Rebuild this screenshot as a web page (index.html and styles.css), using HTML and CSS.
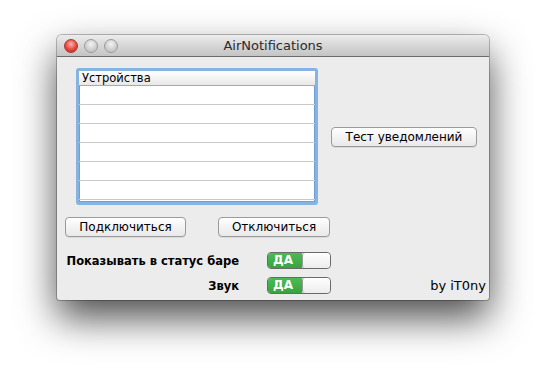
FILE: index.html
```html
<!DOCTYPE html>
<html lang="ru">
<head>
  <meta charset="UTF-8">
  <title>AirNotifications</title>
  <link rel="stylesheet" href="styles.css">
</head>
<body>
  <div class="window">
    <header class="titlebar">
      <div class="lights">
        <span class="light close"></span>
        <span class="light"></span>
        <span class="light"></span>
      </div>
      <h1>AirNotifications</h1>
    </header>

    <main class="content">
      <section class="top">
        <div class="devices">
          <div class="devices-head">Устройства</div>
          <div class="devices-row"></div>
          <div class="devices-row"></div>
          <div class="devices-row"></div>
          <div class="devices-row"></div>
          <div class="devices-row"></div>
          <div class="devices-row"></div>
        </div>
        <button class="btn btn-test">Тест уведомлений</button>
      </section>

      <section class="actions">
        <button class="btn btn-connect">Подключиться</button>
        <button class="btn btn-disconnect">Отключиться</button>
      </section>

      <section class="settings">
        <span class="label">Показывать в статус баре</span>
        <span class="toggle"><span class="toggle-on">ДА</span><span class="toggle-knob"></span></span>
        <span></span>
        <span></span>

        <span class="label">Звук</span>
        <span class="toggle"><span class="toggle-on">ДА</span><span class="toggle-knob"></span></span>
        <span></span>
        <span class="credit">by iT0ny</span>
      </section>
    </main>
  </div>
</body>
</html>
```

FILE: styles.css
```css
html {
  height: 100%;
  background-color: #ffffff;
}

body {
  margin: 0;
  min-height: 100%;
  box-sizing: border-box;
  padding: 35px 0 0 57px;
  font-family: "DejaVu Sans", "Liberation Sans", sans-serif;
  font-size: 12px;
  color: #000;
}

.window {
  width: 432px;
  height: 265px;
  border-radius: 5px 5px 3px 3px;
  background-color: #ececec;
  box-shadow: 0 18px 38px rgba(0, 0, 0, 0.7), 0 0 0 1px rgba(0, 0, 0, 0.25);
  overflow: hidden;
}

.titlebar {
  height: 21px;
  border-bottom: 1px solid #6b6b6b;
  background: linear-gradient(#ececec, #d3d3d3 60%, #c4c4c4);
  display: flex;
  align-items: center;
  position: relative;
}

.titlebar h1 {
  margin: 0;
  flex: 1;
  text-align: center;
  font-size: 13px;
  font-weight: normal;
  color: #2a2a2a;
}

.lights {
  position: absolute;
  left: 7px;
  top: 4px;
  display: flex;
  gap: 6px;
}

.light {
  width: 12px;
  height: 12px;
  border-radius: 50%;
  border: 1px solid #9a9a9a;
  background: radial-gradient(circle at 50% 35%, #f4f4f4, #cfcfcf 55%, #b9b9b9);
}

.light.close {
  border-color: #a8332d;
  background: radial-gradient(circle at 50% 35%, #ffb3ad, #e4473f 55%, #b72820);
}

.content {
  padding: 11px 0 0 8px;
}

.top {
  display: flex;
  align-items: center;
  padding-left: 11px;
}

.devices {
  width: 242px;
  height: 137px;
  box-sizing: border-box;
  border: 3px solid #86b3e2;
  border-radius: 3px;
  background-color: #fff;
  box-shadow: inset 0 0 0 1px #6f9fd4;
}

.devices-head {
  height: 14px;
  line-height: 15px;
  padding-left: 3px;
  border-bottom: 1px solid #a9a9a9;
  background: linear-gradient(#ffffff, #e8e8e8);
  font-size: 11.5px;
}

.devices-row {
  height: 18px;
  border-bottom: 1px solid #c9c9c9;
}

.btn {
  height: 20px;
  box-sizing: border-box;
  padding: 0;
  border: 1px solid #9a9a9a;
  border-radius: 4px;
  background: linear-gradient(#ffffff, #f3f3f3 50%, #e9e9e9);
  box-shadow: 0 1px 0 rgba(0, 0, 0, 0.08);
  font-family: inherit;
  font-size: 12px;
  color: #000;
}

.btn-test {
  width: 146px;
  margin-left: 13px;
}

.actions {
  display: flex;
  gap: 32px;
  margin-top: 12px;
}

.btn-connect {
  width: 121px;
}

.btn-disconnect {
  width: 112px;
}

.settings {
  display: grid;
  grid-template-columns: 174px 64px 1fr auto;
  column-gap: 28px;
  row-gap: 8px;
  align-items: center;
  margin-top: 15px;
  padding-right: 3px;
}

.label {
  text-align: right;
  white-space: nowrap;
  font-weight: bold;
  font-size: 11.5px;
}

.toggle {
  display: flex;
  height: 17px;
  box-sizing: border-box;
  border: 1px solid #6a6a6a;
  border-radius: 4px;
  overflow: hidden;
}

.toggle-on {
  width: 34px;
  background: linear-gradient(#4dbb55, #37a43f);
  color: #fff;
  font-weight: bold;
  font-size: 12px;
  line-height: 15px;
  padding-left: 5px;
  box-sizing: border-box;
}

.toggle-knob {
  flex: 1;
  border-left: 1px solid #9a9a9a;
  border-radius: 3px;
  background: linear-gradient(#ffffff, #ececec);
}

.credit {
  font-size: 13px;
}
```
